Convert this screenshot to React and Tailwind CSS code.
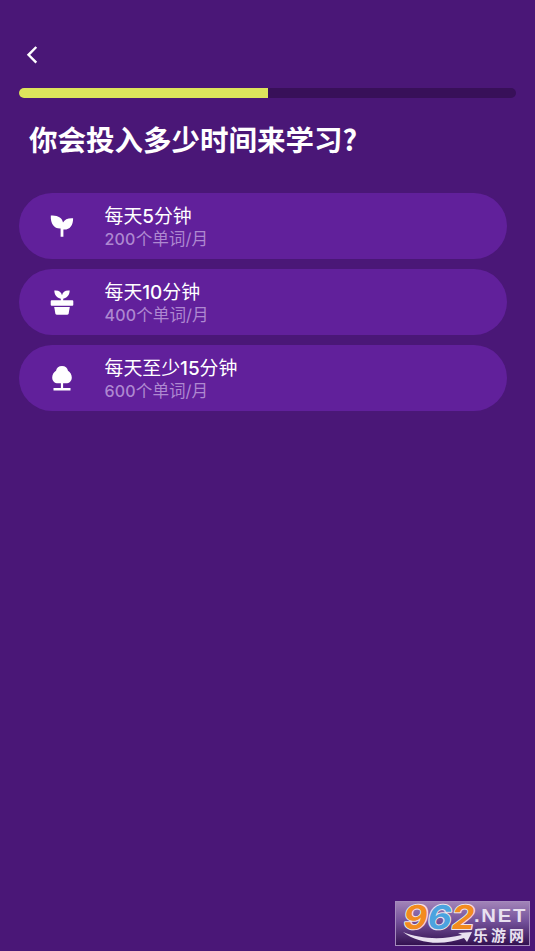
import React from 'react';

const cjk = "font-['Inter','Noto_Sans_CJK_SC',sans-serif]";

function Sprout() {
  return (
    <svg width="24" height="24" viewBox="0 0 24 24" fill="#fff">
      <path d="M.8 1.500C7.500 .8 12.600 4 13 8.600C14.800 5.300 18 3.800 23.100 4.200C23.200 11.700 19.500 16 13.400 15.500V22.800H10.600V14.500C4.200 14.800 .4 10 .8 1.500Z" />
    </svg>
  );
}

function Pot() {
  return (
    <svg width="24" height="26" viewBox="0 0 24 26" fill="#fff">
      <path d="M4.300 1.600C8.500 1 11.300 3 12 6.200C12.700 3 15.500 1 19.700 1.600C19.500 6.300 17 9 13.200 9.700V11.200H22.300Q23.300 11.200 23.300 12.200V15.800Q23.300 16.800 22.300 16.800H1.700Q.7 16.800 .7 15.800V12.200Q.7 11.200 1.700 11.200H10.800V9.700C7 9 4.500 6.300 4.300 1.600Z" />
      <path d="M4.200 17.900H19.800L18.700 24.200Q18.400 25.700 17 25.700H7Q5.600 25.700 5.300 24.200Z" />
    </svg>
  );
}

function Tree() {
  return (
    <svg width="24" height="26" viewBox="0 0 24 26" fill="#fff">
      <path d="M12 1C15.300 1 17.400 3 18 5.800C20.200 7.300 21.800 9.700 21.800 12.400C21.800 15.900 19.400 18.200 16 18.200H13.100V23H20.500V25.400H3.500V23H10.900V18.200H8C4.600 18.200 2.200 15.900 2.200 12.400C2.200 9.700 3.800 7.300 6 5.800C6.600 3 8.700 1 12 1Z" />
    </svg>
  );
}

const options = [
  { icon: Sprout, title: '每天5分钟', detail: '200个单词/月' },
  { icon: Pot, title: '每天10分钟', detail: '400个单词/月' },
  { icon: Tree, title: '每天至少15分钟', detail: '600个单词/月' },
];

function Watermark() {
  return (
    <svg className="absolute top-[901px] left-[395px]" width="135" height="45" viewBox="0 0 135 45">
      <defs>
        <linearGradient id="plate" x1="0" y1="0" x2="0" y2="1">
          <stop offset="0" stopColor="#a284b8" />
          <stop offset=".45" stopColor="#74519a" />
          <stop offset="1" stopColor="#32104f" />
        </linearGradient>
      </defs>
      <rect x=".5" y=".5" width="134" height="44" fill="url(#plate)" stroke="#a58bbd" />
      <path d="M8 31C25 38 47 39 67 34L63 32L77 31L72 41L69 37C48 45 23 43 8 31Z" fill="#e9e1f0" />
      <g
        transform="skewX(-10)"
        fontFamily="Inter, sans-serif"
        fontWeight="700"
        fontSize="33"
        stroke="#eee3ea"
        strokeWidth="2"
        strokeLinejoin="round"
        paintOrder="stroke"
      >
        <text x="12" y="28" textLength="24" lengthAdjust="spacingAndGlyphs" fill="#f28b20">9</text>
        <text x="36" y="28" textLength="24" lengthAdjust="spacingAndGlyphs" fill="#4ba3df">6</text>
        <text x="60" y="28" textLength="23" lengthAdjust="spacingAndGlyphs" fill="#f28b20">2</text>
      </g>
      <text x="79" y="21" textLength="53" lengthAdjust="spacingAndGlyphs" fontFamily="Liberation Sans, sans-serif" fontWeight="700" fontSize="18" letterSpacing="1.500" fill="#e9e1f0">.NET</text>
      <text x="78" y="39.500" textLength="51" lengthAdjust="spacing" fontFamily="Noto Sans CJK SC, sans-serif" fontWeight="700" fontSize="15" fill="#e9e1f0">乐游网</text>
    </svg>
  );
}

export default function App() {
  return (
    <main className={`relative h-[951px] w-[535px] overflow-hidden bg-[#4a1777] pl-[19px] text-white ${cjk}`}>
      <header className="flex h-[88px] items-start pt-[46px] pl-[7px]">
        <svg width="12" height="18" viewBox="0 0 12 18" fill="none" stroke="#fff" strokeWidth="2.400">
          <path d="M10.300 1L2.500 8.800L10.300 16.600" />
        </svg>
      </header>
      <div className="h-[10px] w-[497px] overflow-hidden rounded-full bg-[#381059]">
        <div className="h-full w-[248.500px] bg-[#dde45c]" />
      </div>
      <h1 className="mt-[20px] ml-[10px] h-[42px] font-['Noto_Sans_CJK_SC',sans-serif] text-[28.500px] leading-[42px] font-bold whitespace-nowrap">
        你会投入多少时间来学习?
      </h1>
      <div className="mt-[33px] flex w-[487.500px] flex-col gap-[10px]">
        {options.map(({ icon: Icon, title, detail }) => (
          <button key={title} className="flex h-[66px] items-center rounded-full bg-[#61209b] pl-[31px] text-left">
            <Icon />
            <span className="ml-[30.500px] flex flex-col pt-[3px] whitespace-nowrap">
              <span className="h-[23px] text-[18.900px] leading-[24px]">
                {title.split(/(\d+)/).map((part, i) => (
                  <span key={i} className={i % 2 ? 'font-medium' : 'font-normal'}>{part}</span>
                ))}
              </span>
              <span className="h-[22px] text-[16.600px] leading-[22px] text-[#ae88d1]">
                {detail.split(/(\d+)/).map((part, i) => (
                  <span key={i} className={i % 2 ? 'text-[16px] font-medium tracking-[0.200px]' : 'font-normal'}>{part}</span>
                ))}
              </span>
            </span>
          </button>
        ))}
      </div>
      <Watermark />
    </main>
  );
}
